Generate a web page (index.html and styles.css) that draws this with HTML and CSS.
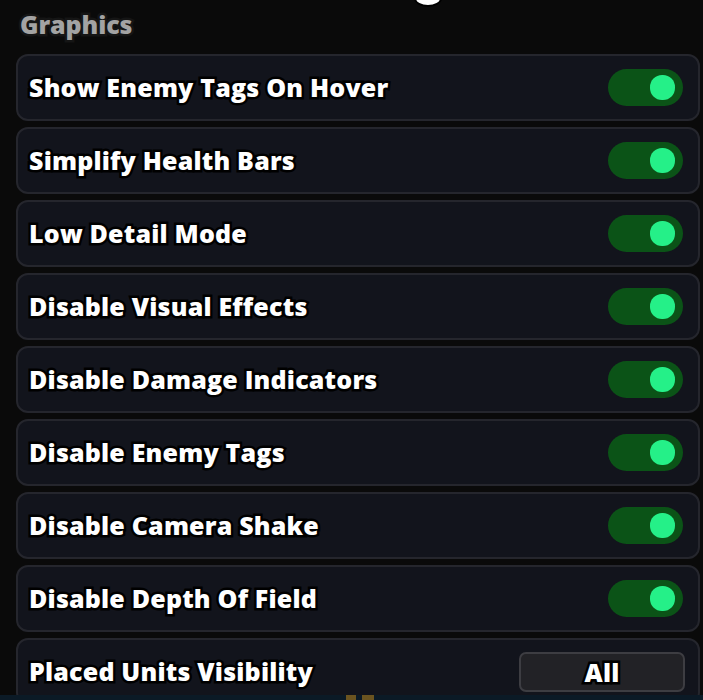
FILE: index.html
```html
<!DOCTYPE html>
<html>
<head>
<meta charset="utf-8">
<link rel="stylesheet" href="styles.css">
</head>
<body>
<div class="title-tail"></div>
<div class="panel">
  <div class="section-title">Graphics</div>
  <div class="list">
    <div class="row"><span class="label">Show Enemy Tags On Hover</span><div class="toggle"><div class="knob"></div></div></div>
    <div class="row"><span class="label">Simplify Health Bars</span><div class="toggle"><div class="knob"></div></div></div>
    <div class="row"><span class="label">Low Detail Mode</span><div class="toggle"><div class="knob"></div></div></div>
    <div class="row"><span class="label">Disable Visual Effects</span><div class="toggle"><div class="knob"></div></div></div>
    <div class="row"><span class="label">Disable Damage Indicators</span><div class="toggle"><div class="knob"></div></div></div>
    <div class="row"><span class="label">Disable Enemy Tags</span><div class="toggle"><div class="knob"></div></div></div>
    <div class="row"><span class="label">Disable Camera Shake</span><div class="toggle"><div class="knob"></div></div></div>
    <div class="row"><span class="label">Disable Depth Of Field</span><div class="toggle"><div class="knob"></div></div></div>
    <div class="row"><span class="label">Placed Units Visibility</span><div class="dropdown"><span class="label">All</span></div></div>
  </div>
</div>
<div class="bottom-strip"><div class="gold a"></div><div class="gold b"></div></div>
</body>
</html>
```
FILE: styles.css
```css
html, body {
  margin: 0;
  padding: 0;
  background: #0a0a0a;
  width: 703px;
  height: 700px;
  overflow: hidden;
  position: relative;
  font-family: "Open Sans", "Lato", sans-serif;
}
.title-tail {
  position: absolute;
  left: 414px;
  top: -10px;
  width: 24px;
  height: 13px;
  background: #fff;
  border: 2px solid #000;
  border-radius: 50%;
}
.panel {
  padding: 0 3px 0 16px;
}
.section-title {
  height: 54px;
  box-sizing: border-box;
  padding: 7px 0 0 4px;
  font-size: 25px;
  font-weight: 800;
  line-height: 34px;
  color: #a3a3a3;
  -webkit-text-stroke: 5px #151515;
  paint-order: stroke fill;
  letter-spacing: -0.1px;
}
.list {
  display: flex;
  flex-direction: column;
  gap: 6px;
}
.row {
  height: 67px;
  box-sizing: border-box;
  border: 2px solid #25262d;
  border-radius: 12px;
  background: #12141c;
  display: flex;
  align-items: center;
  justify-content: space-between;
  padding: 0 15px 0 11px;
  flex-shrink: 0;
}
.label {
  font-size: 25px;
  font-weight: 800;
  color: #fff;
  -webkit-text-stroke: 5px #000;
  paint-order: stroke fill;
  letter-spacing: 0.2px;
  white-space: nowrap;
  line-height: 34px;
  margin-top: -2px;
}
.toggle {
  width: 75px;
  height: 37px;
  border-radius: 19px;
  background: #0b5317;
  display: flex;
  align-items: center;
  justify-content: flex-end;
  padding-right: 8px;
  box-sizing: border-box;
}
.knob {
  width: 25px;
  height: 25px;
  border-radius: 12px;
  background: #25f088;
}
.dropdown {
  width: 166px;
  height: 40px;
  margin-right: -2px;
  box-sizing: border-box;
  border: 2px solid #3d3d42;
  border-radius: 7px;
  background: #222226;
  display: flex;
  align-items: center;
  justify-content: center;
}
.dropdown .label {
  margin-top: 0;
}
.bottom-strip {
  position: absolute;
  left: 0;
  top: 695px;
  width: 703px;
  height: 5px;
  background: #0b1a26;
}
.gold {
  position: absolute;
  top: 0;
  height: 5px;
  background: #6b5420;
}
.gold.a { left: 346px; width: 10px; }
.gold.b { left: 362px; width: 12px; }
```
